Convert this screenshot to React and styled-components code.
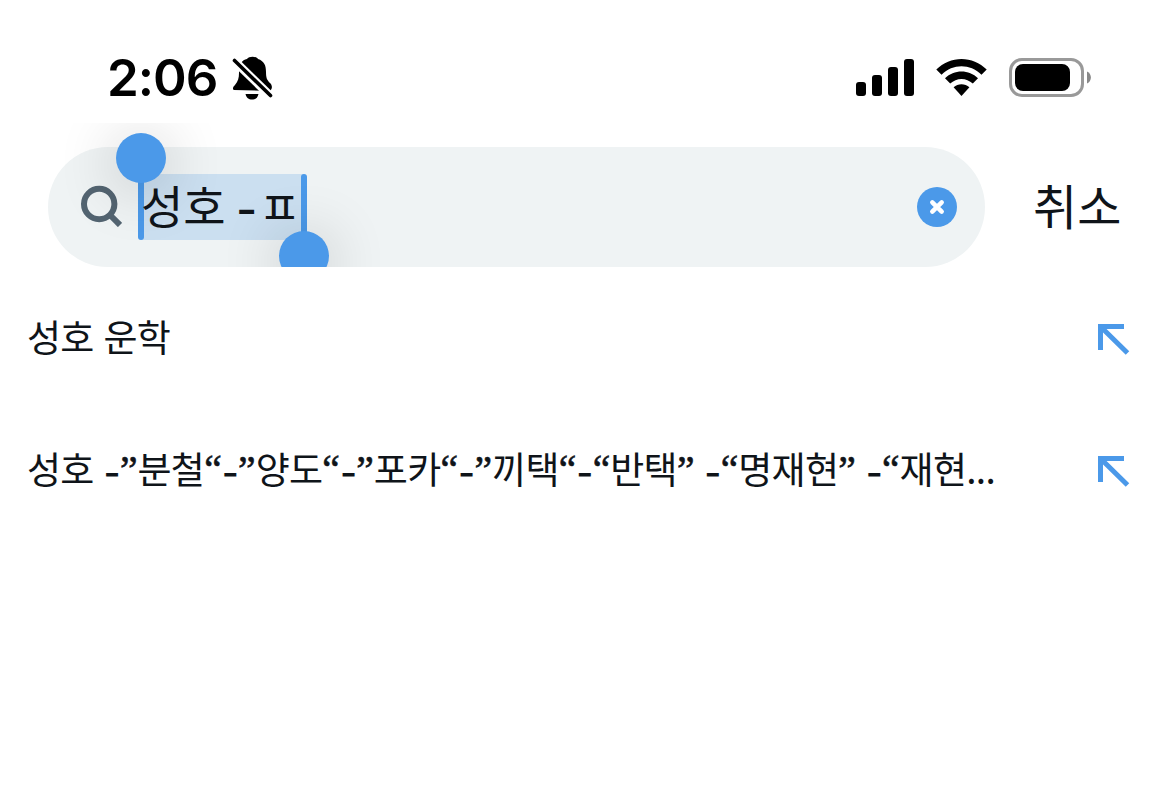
import React from "react";
import styled, { createGlobalStyle } from "styled-components";

const GlobalStyle = createGlobalStyle`
  * { box-sizing: border-box; }
  body {
    margin: 0;
    background: #fff;
    color: #0f1419;
    font-family: "Noto Sans CJK KR", sans-serif;
  }
`;

const Screen = styled.main`
  width: 1170px;
  height: 788px;
  background: #fff;
  overflow: hidden;
`;

const StatusBar = styled.header`
  height: 123px;
  padding: 55px 78px 0 107px;
  display: flex;
  justify-content: space-between;
  align-items: flex-start;
  color: #000;
`;

const StatusGroup = styled.div`
  display: flex;
  gap: ${(p) => p.$gap}px;
  height: 46px;
`;

const Time = styled.time`
  width: 110px;
  font: 600 51px/46px Inter, sans-serif;
  letter-spacing: -1px;
  white-space: nowrap;
`;

const Icon = styled.svg`
  display: block;
  flex: none;
`;

const SearchBar = styled.section`
  position: relative;
  height: 144px;
  padding: 24px 48px 0;
  display: flex;
  gap: 48px;
  overflow: hidden;
`;

const Field = styled.div`
  width: 937px;
  height: 120px;
  padding: 0 28px 0 32px;
  border-radius: 60px;
  background: #eff3f4;
  display: flex;
  align-items: center;
`;

const SearchIcon = styled(Icon)`
  margin-bottom: 3px;
`;

const Selection = styled.div`
  position: relative;
  width: 163px;
  height: 66px;
  margin: 0 auto 0 19px;
  background: #cbdff0;
`;

const Handle = styled.span`
  position: absolute;
  top: 0;
  left: ${(p) => (p.$end ? 160 : -3)}px;
  width: 6px;
  height: 66px;
  border-radius: 3px;
  background: #4b99e9;
  &::after {
    content: "";
    position: absolute;
    left: -22px;
    top: ${(p) => (p.$end ? 57 : -41)}px;
    width: 50px;
    height: 50px;
    border-radius: 50%;
    background: #4b99e9;
    box-shadow: 0 6px 60px rgba(0, 0, 0, 0.24);
  }
`;

const Query = styled.span`
  position: relative;
  z-index: 1;
  display: block;
  font-size: 46px;
  line-height: 60px;
  white-space: pre;
`;

const Jamo = styled.span`
  word-spacing: -9px;
`;

const Dash = styled.span`
  font-family: Inter, sans-serif;
  font-weight: 500;
  line-height: 0;
  vertical-align: -2px;
`;

const Quote = styled.span`
  font: 400 39.5px/0 "Liberation Serif", serif;
  letter-spacing: 0;
  vertical-align: 1px;
  -webkit-text-stroke: 0.6px currentColor;
`;

const ClearButton = styled.button`
  width: 40px;
  height: 40px;
  padding: 0;
  border: 0;
  border-radius: 50%;
  background: #4b99e9;
`;

const Cancel = styled.button`
  height: 114px;
  padding: 0;
  border: 0;
  background: none;
  color: #0f1419;
  font: 400 48px/114px "Noto Sans CJK KR", sans-serif;
  white-space: nowrap;
`;

const Suggestions = styled.ul`
  margin: 0;
  padding: 6px 40px 0 27px;
  list-style: none;
`;

const Suggestion = styled.li`
  height: 132px;
  display: flex;
  align-items: center;
  justify-content: space-between;
`;

const Label = styled.span`
  padding-bottom: 6px;
  font-size: 37px;
  line-height: 50px;
  letter-spacing: -0.7px;
  word-spacing: 2.2px;
  white-space: pre;
`;

const punctuated = (text) =>
  text.split(/([-“”]+?)/).map((part, i) => {
    if (part === "-") return <Dash key={i}>-</Dash>;
    if (part === "“" || part === "”") return <Quote key={i}>{part}</Quote>;
    return part;
  });

const FillArrow = () => (
  <Icon width="32" height="32" viewBox="0 0 32 32" fill="none" stroke="#4b99e9" strokeWidth="5">
    <path d="M26 3.5H2.5V27M3.500 4.500L29.500 30" />
  </Icon>
);

const suggestions = [
  "성호 운학",
  "성호 -”분철“-”양도“-”포카“-”끼택“-“반택” -“명재현” -“재현...",
];

export default function App() {
  return (
    <Screen>
      <GlobalStyle />
      <StatusBar>
        <StatusGroup $gap={15}>
          <Time>2:06</Time>
          <Icon width="42" height="46" viewBox="0 0 42 46">
            <path d="M2 35C.5 35 .5 32 3 30C6 26 7 23 7 18C7 9 10 5 15 4C17 1 24 1 26 4C32 6 34 10 34 17C34 23 35 25 38 28C40 30 41 33 38 36Z" fill="#000" />
            <path d="M13.500 39H26.500C25.500 43 23.500 44.500 20 44.500S14.500 43 13.500 39Z" fill="#000" />
            <path d="M0 3.500L40 42.500" stroke="#fff" strokeWidth="8.500" />
            <path d="M2.500 5.500L38.500 40.500" stroke="#000" strokeWidth="3.600" strokeLinecap="round" />
          </Icon>
        </StatusGroup>
        <StatusGroup $gap={22}>
          <Icon width="58" height="46" viewBox="0 0 58 46">
            <rect x="0" y="27" width="10" height="14" rx="3" />
            <rect x="16" y="20" width="10" height="21" rx="3" />
            <rect x="32" y="12" width="10" height="29" rx="3" />
            <rect x="48" y="4" width="10" height="37" rx="3" />
          </Icon>
          <Icon width="51" height="46" viewBox="0 0 51 46">
            <path d="M0.3 14.6C14 .4 37 .4 50.700 14.6L45.500 19.800C34 8.500 17 8.500 5.500 19.800Z" />
            <path d="M9 23.300C18 14.200 33 14.200 42 23.300L36.800 28.600C30.500 22.300 20.500 22.300 14.200 28.600Z" />
            <path d="M17.600 32.300C22 28.200 29 28.200 33.400 32.300L25.500 41Z" />
          </Icon>
          <Icon width="83" height="46" viewBox="0 0 83 46">
            <rect x="1.500" y="4.500" width="72" height="36" rx="11.500" fill="none" stroke="#999" strokeWidth="3" />
            <rect x="6" y="9" width="55" height="27" rx="8" />
            <path d="M78 16.500C83.200 18.500 83.200 26.500 78 28.500Z" fill="#888" />
          </Icon>
        </StatusGroup>
      </StatusBar>

      <SearchBar>
        <Field>
          <SearchIcon width="42" height="42" viewBox="0 0 42 42" fill="none" stroke="#536471" strokeWidth="6">
            <circle cx="19.200" cy="19" r="15.200" />
            <path d="M29.500 29.500L40 40" />
          </SearchIcon>
          <Selection>
            <Query>
              성호 <Dash>-</Dash>
              <Jamo> ㅍ</Jamo>
            </Query>
            <Handle />
            <Handle $end />
          </Selection>
          <ClearButton aria-label="지우기">
            <Icon width="40" height="40" viewBox="0 0 40 40" stroke="#fff" strokeWidth="4.500" strokeLinecap="round">
              <path d="M15.300 15.300L24.700 24.700M24.700 15.300L15.300 24.700" />
            </Icon>
          </ClearButton>
        </Field>
        <Cancel>취소</Cancel>
      </SearchBar>

      <Suggestions>
        {suggestions.map((text) => (
          <Suggestion key={text}>
            <Label>{punctuated(text)}</Label>
            <FillArrow />
          </Suggestion>
        ))}
      </Suggestions>
    </Screen>
  );
}
